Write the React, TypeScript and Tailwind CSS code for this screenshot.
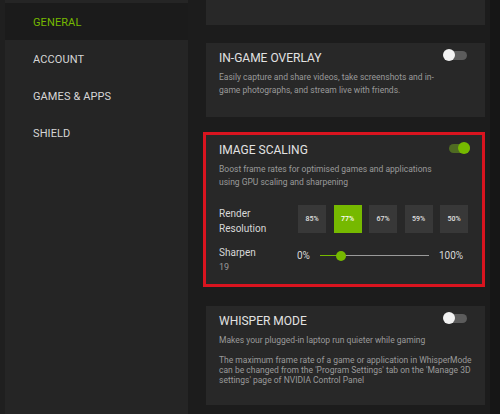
import React from "react";

const GREEN = "#76b900";

function Toggle({ on }: { on: boolean }) {
  return (
    <div className="relative w-[24px] h-[12px] flex items-center">
      <div
        className={
          "absolute left-[3px] right-0 h-[9px] rounded-full " +
          (on ? "bg-[#4f6b22]" : "bg-[#5c5c5c]")
        }
      />
      <div
        className={
          "absolute top-0 w-[12px] h-[12px] rounded-full " +
          (on ? "right-0 bg-[#76b900]" : "left-0 bg-[#f2f2f2]")
        }
      />
    </div>
  );
}

const navItems = ["GENERAL", "ACCOUNT", "GAMES & APPS", "SHIELD"];
const scales = ["85%", "77%", "67%", "59%", "50%"];

export default function App() {
  return (
    <div
      className="w-[500px] h-[414px] flex overflow-hidden bg-[#1c1c1c]"
      style={{ fontFamily: "Roboto, 'Liberation Sans', sans-serif" }}
    >
      {/* side navigation */}
      <aside className="w-[188px] pl-[5px] bg-[#1f1f1f] flex">
        <div className="flex-1 bg-[#252525] pt-[3px] flex flex-col">
          {navItems.map((n, i) => (
            <div
              key={n}
              className={
                "h-[37px] pl-[28px] pt-[4px] flex items-center text-[11px] tracking-[0.1px] " +
                (i === 0 ? "bg-[#1b1b1b] text-[#76b900]" : "text-[#d6d6d6]")
              }
            >
              {n}
            </div>
          ))}
        </div>
      </aside>

      {/* settings column */}
      <main className="flex-1 flex">
        <div className="ml-[18px] w-[279px] flex flex-col">
          <div className="h-[25px] bg-[#282828]" />

          {/* in-game overlay */}
          <section className="mt-[18px] h-[74px] bg-[#282828] pl-[13px] pr-[18px] pt-[8px]">
            <div className="flex items-center justify-between">
              <h2 className="text-[12px] leading-[14px] text-[#e2e2e2]">IN-GAME OVERLAY</h2>
              <div className="-mt-[6px]">
                <Toggle on={false} />
              </div>
            </div>
            <p className="mt-[6px] text-[8.5px] leading-[13px] text-[#9a9a9a] w-[225px]">
              Easily capture and share videos, take screenshots and in-game photographs, and stream live with friends.
            </p>
          </section>

          {/* image scaling */}
          <div className="mt-[15px] -ml-[3px] w-[282px] h-[155px] border-[3px] border-[#d9141f]">
            <section className="h-full bg-[#282828] pl-[13px] pr-[12px] pt-[8px]">
              <div className="flex items-center justify-between">
                <h2 className="text-[12px] leading-[14px] text-[#e2e2e2]">IMAGE SCALING</h2>
                <div className="-mt-[4px]">
                  <Toggle on={true} />
                </div>
              </div>
              <p className="mt-[6px] text-[8.5px] leading-[13px] text-[#9a9a9a] w-[225px]">
                Boost frame rates for optimised games and applications using GPU scaling and sharpening
              </p>
              <div className="mt-[16px] flex">
                <div className="w-[79px] pt-[1px] text-[10px] leading-[15px] text-[#d8d8d8]">
                  Render
                  <br />
                  Resolution
                </div>
                <div className="flex gap-[7.5px]">
                  {scales.map((s, i) => (
                    <div
                      key={s}
                      className={
                        "w-[28px] h-[28px] flex items-center justify-center text-[7px] font-medium " +
                        (i === 1 ? "bg-[#76b900] text-white" : "bg-[#383838] text-[#e0e0e0]")
                      }
                    >
                      {s}
                    </div>
                  ))}
                </div>
              </div>
              <div className="mt-[9px] flex">
                <div className="w-[78px]">
                  <div className="text-[10px] leading-[15px] text-[#d8d8d8]">Sharpen</div>
                  <div className="text-[9px] leading-[15px] text-[#9a9a9a]">19</div>
                </div>
                <div className="h-[15px] mt-[3px] flex items-center">
                  <span className="text-[10px] text-[#d8d8d8] w-[23px]">0%</span>
                  <div className="relative w-[109px] h-[10px] flex items-center">
                    <div className="absolute left-0 right-0 h-[1.5px] bg-[#9a9a9a]" />
                    <div className="absolute left-0 w-[21px] h-[1.5px]" style={{ background: GREEN }} />
                    <div className="absolute left-[16px] w-[10px] h-[10px] rounded-full bg-[#76b900]" />
                  </div>
                  <span className="ml-[10px] text-[10px] text-[#d8d8d8]">100%</span>
                </div>
              </div>
            </section>
          </div>

          {/* whisper mode */}
          <section className="mt-[19px] h-[99px] bg-[#282828] pl-[13px] pr-[18px] pt-[8px]">
            <div className="flex items-center justify-between">
              <h2 className="text-[12px] leading-[14px] text-[#e2e2e2]">WHISPER MODE</h2>
              <div className="-mt-[6px]">
                <Toggle on={false} />
              </div>
            </div>
            <p className="mt-[6px] text-[8.5px] leading-[13px] text-[#9a9a9a]">
              Makes your plugged-in laptop run quieter while gaming
            </p>
            <p className="mt-[8px] text-[8.5px] leading-[10px] text-[#9a9a9a] w-[260px]">
              The maximum frame rate of a game or application in WhisperMode can be changed from the 'Program Settings' tab on the 'Manage 3D settings' page of NVIDIA Control Panel
            </p>
          </section>
        </div>
        <div className="ml-auto w-[10px] bg-[#161616]" />
      </main>
    </div>
  );
}
